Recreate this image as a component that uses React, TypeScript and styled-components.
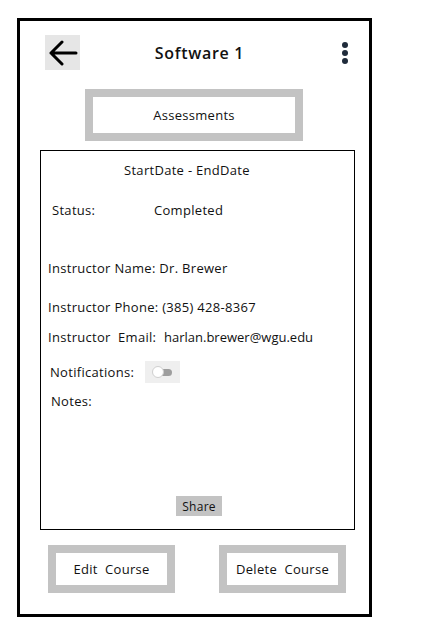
import React from "react";
import styled, { createGlobalStyle } from "styled-components";

const Global = createGlobalStyle`
  html, body { margin: 0; padding: 0; background: #ffffff; }
  body { font-family: "Open Sans", "DejaVu Sans", sans-serif; color: #111; letter-spacing: 0.3px; }
  * { box-sizing: border-box; }
`;

const Frame = styled.div`
  margin: 18px 0 0 17px;
  width: 355px;
  height: 599px;
  border: 3px solid #000;
  display: flex;
  flex-direction: column;
`;

const Header = styled.div`
  display: flex;
  align-items: center;
  padding: 14px 0 0 25px;
`;

const BackButton = styled.div`
  width: 35px;
  height: 35px;
  background: #e6e6e6;
  display: flex;
  align-items: center;
  justify-content: center;
`;

const Title = styled.div`
  flex: 1;
  text-align: center;
  font-size: 16px;
  font-weight: 600;
  letter-spacing: 0.7px;
`;

const Kebab = styled.div`
  width: 50px;
  display: flex;
  flex-direction: column;
  align-items: flex-end;
  gap: 2px;
  padding-right: 21px;
`;

const Dot = styled.span`
  width: 6px;
  height: 6px;
  border-radius: 50%;
  background: #1f2b3b;
`;

const FramedButton = styled.div<{ $w: number; $h: number }>`
  width: ${(p) => p.$w}px;
  height: ${(p) => p.$h}px;
  border: 8px solid #c3c3c3;
  background: #fff;
  display: flex;
  align-items: center;
  justify-content: center;
  font-size: 13px;
  white-space: pre;
`;

const AssessRow = styled.div`
  margin: 19px 0 0 65px;
`;

const Card = styled.div`
  margin: 9px 0 0 20px;
  width: 315px;
  height: 380px;
  border: 1px solid #000;
  display: flex;
  flex-direction: column;
  padding-bottom: 13px;
`;

const Line = styled.div<{ $indent: number; $top: number; $h?: number }>`
  margin: ${(p) => p.$top}px 0 0 ${(p) => p.$indent}px;
  height: ${(p) => p.$h ?? 20}px;
  display: flex;
  align-items: center;
  font-size: 13px;
  white-space: pre;
`;

const Label = styled.span<{ $w?: number }>`
  display: inline-block;
  ${(p) => (p.$w ? `width: ${p.$w}px;` : "")}
`;

const Value = styled.span<{ $tight?: boolean }>`
  ${(p) => (p.$tight ? "letter-spacing: 0;" : "")}
`;

const ToggleBox = styled.div`
  margin-left: 11px;
  width: 35px;
  height: 22px;
  background: #efefef;
  position: relative;
`;

const Track = styled.div`
  position: absolute;
  left: 11px;
  top: 8px;
  width: 16px;
  height: 7px;
  border-radius: 4px;
  background: #9e9e9e;
`;

const Knob = styled.div`
  position: absolute;
  left: 7px;
  top: 5px;
  width: 12px;
  height: 12px;
  border-radius: 50%;
  background: #fff;
  border: 1px solid #cfcfcf;
`;

const ShareButton = styled.div`
  margin: auto 0 0 135px;
  width: 46px;
  height: 20px;
  background: #c3c3c3;
  display: flex;
  align-items: center;
  justify-content: center;
  font-size: 12px;
`;

const BottomRow = styled.div`
  margin: 15px 0 0 28px;
  display: flex;
  gap: 44px;
`;

export default function App() {
  return (
    <>
      <Global />
      <Frame>
        <Header>
          <BackButton>
            <svg width="30" height="26" viewBox="0 0 30 26">
              <path
                d="M28 13 H3 M14 2 L3 13 L14 24"
                fill="none"
                stroke="#000"
                strokeWidth="3"
                strokeLinecap="round"
                strokeLinejoin="round"
              />
            </svg>
          </BackButton>
          <Title>Software 1</Title>
          <Kebab>
            <Dot />
            <Dot />
            <Dot />
          </Kebab>
        </Header>
        <AssessRow>
          <FramedButton $w={218} $h={52}>Assessments</FramedButton>
        </AssessRow>
        <Card>
          <Line $indent={83} $top={9}>StartDate - EndDate</Line>
          <Line $indent={11} $top={20}>
            <Label $w={102}>Status:</Label>
            <Value>Completed</Value>
          </Line>
          <Line $indent={7} $top={38}>Instructor Name: Dr. Brewer</Line>
          <Line $indent={7} $top={19}>Instructor Phone: (385) 428-8367</Line>
          <Line $indent={7} $top={10}>
            <Label $w={116}>Instructor  Email:</Label>
            <Value $tight>harlan.brewer@wgu.edu</Value>
          </Line>
          <Line $indent={9} $top={14} $h={22}>
            <Label>Notifications:</Label>
            <ToggleBox>
              <Track />
              <Knob />
            </ToggleBox>
          </Line>
          <Line $indent={10} $top={8}>Notes:</Line>
          <ShareButton>Share</ShareButton>
        </Card>
        <BottomRow>
          <FramedButton $w={127} $h={48}>Edit  Course</FramedButton>
          <FramedButton $w={127} $h={48}>Delete  Course</FramedButton>
        </BottomRow>
      </Frame>
    </>
  );
}
